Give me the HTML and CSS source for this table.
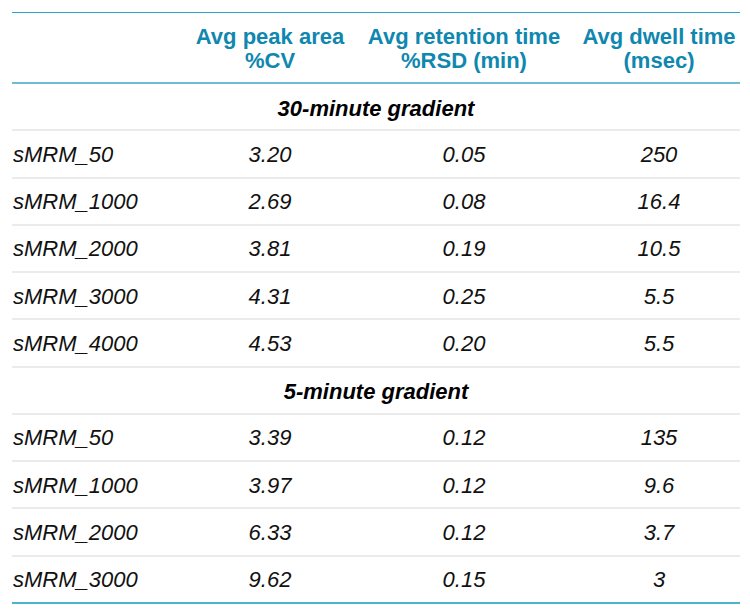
FILE: index.html
```html
<!DOCTYPE html>
<html>
<head>
<meta charset="utf-8">
<link rel="stylesheet" href="styles.css">
</head>
<body>
<div class="table">
  <div class="row head">
    <div class="cell"></div>
    <div class="cell">Avg peak area<br>%CV</div>
    <div class="cell">Avg retention time<br>%RSD (min)</div>
    <div class="cell">Avg dwell time<br>(msec)</div>
  </div>
  <div class="row section"><div class="cell span">30-minute gradient</div></div>
  <div class="row"><div class="cell name">sMRM_50</div><div class="cell">3.20</div><div class="cell">0.05</div><div class="cell">250</div></div>
  <div class="row"><div class="cell name">sMRM_1000</div><div class="cell">2.69</div><div class="cell">0.08</div><div class="cell">16.4</div></div>
  <div class="row"><div class="cell name">sMRM_2000</div><div class="cell">3.81</div><div class="cell">0.19</div><div class="cell">10.5</div></div>
  <div class="row"><div class="cell name">sMRM_3000</div><div class="cell">4.31</div><div class="cell">0.25</div><div class="cell">5.5</div></div>
  <div class="row"><div class="cell name">sMRM_4000</div><div class="cell">4.53</div><div class="cell">0.20</div><div class="cell">5.5</div></div>
  <div class="row section"><div class="cell span">5-minute gradient</div></div>
  <div class="row"><div class="cell name">sMRM_50</div><div class="cell">3.39</div><div class="cell">0.12</div><div class="cell">135</div></div>
  <div class="row"><div class="cell name">sMRM_1000</div><div class="cell">3.97</div><div class="cell">0.12</div><div class="cell">9.6</div></div>
  <div class="row"><div class="cell name">sMRM_2000</div><div class="cell">6.33</div><div class="cell">0.12</div><div class="cell">3.7</div></div>
  <div class="row last"><div class="cell name">sMRM_3000</div><div class="cell">9.62</div><div class="cell">0.15</div><div class="cell">3</div></div>
</div>
</body>
</html>
```
FILE: styles.css
```css
html, body {
  margin: 0;
  padding: 0;
  background: #ffffff;
}
body {
  padding: 12px 10px 0 12px;
  font-family: "Liberation Sans", Arial, sans-serif;
  font-size: 22px;
  color: #111111;
}
.table {
  width: 728px;
  border-top: 1px solid #2ea3c5;
}
.row {
  display: grid;
  grid-template-columns: 178px 160px 228px 162px;
  align-items: center;
  box-sizing: border-box;
  height: 47.25px;
  border-bottom: 2px solid #ebebeb;
  font-style: italic;
}
.cell {
  text-align: center;
  line-height: 24px;
  padding-top: 2px;
}
.cell.name {
  text-align: left;
  padding-left: 1px;
}
.row.head {
  height: 71px;
  align-items: start;
  padding-top: 12px;
  border-bottom: 2px solid #6cbdd1;
  font-style: normal;
  font-weight: bold;
  color: #0f87af;
}
.row.head .cell {
  padding-top: 0;
}
.row.section .span {
  grid-column: 1 / -1;
  font-weight: bold;
  color: #000000;
  padding-top: 4px;
}
.row.last {
  border-bottom-color: #4db2cf;
}
```
